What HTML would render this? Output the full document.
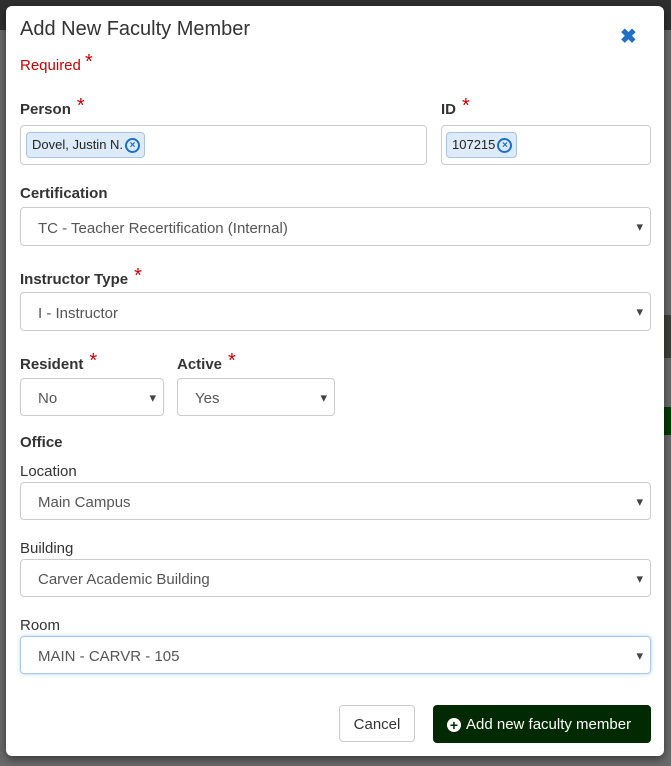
<!DOCTYPE html>
<html><head><style>
body{margin:0;width:671px;height:766px;background:#6a6a6a;font-family:"Liberation Sans",sans-serif;position:relative;overflow:hidden;color:#333}
.topbar{position:absolute;left:0;top:0;width:671px;height:30px;background:#2f2f2f}
.a{position:absolute}
.modal{position:absolute;left:6px;top:6px;width:658px;height:750px;background:#fff;border-radius:6px;box-shadow:0 3px 9px rgba(0,0,0,.5)}
.lbl{position:absolute;font-size:15px;font-weight:bold;color:#333}
.star{color:#c00;font-size:20px;font-weight:normal;margin-left:6px;position:relative;top:-2px}
.sub{position:absolute;font-size:15px;color:#333}
.sel{position:absolute;height:36px;border:1px solid #ccc;border-radius:4px;background:#fff;font-size:15px;color:#555;line-height:38px;padding-left:17px;box-sizing:border-box}
.sel.ar:after{content:"▾";position:absolute;right:7px;top:0;font-size:13px;color:#444}
.tag{position:absolute;top:6px;height:26px;box-sizing:border-box;background:#ddebf8;border:1px solid #a9c4de;border-radius:4px;font-size:13px;padding:0 4px 0 5px;color:#222;display:flex;align-items:center}
.x{display:inline-block;width:11px;height:11px;border:2px solid #1c6fc7;border-radius:50%;color:#1c6fc7;font-size:10px;line-height:11px;text-align:center;font-weight:bold;margin-left:2px}
</style></head><body>
<div class="topbar"></div>
<div class="a" style="left:664px;top:315px;width:7px;height:43px;background:#3f3f3a"></div>
<div class="a" style="left:664px;top:407px;width:7px;height:28px;background:#063806"></div>
<div class="modal">
<div class="a" style="left:14px;top:12px;font-size:20px;color:#333">Add New Faculty Member</div>
<div class="a" style="left:614px;top:18px;font-size:20px;color:#1f6fc5;font-weight:bold">✖</div>
<div class="a" style="left:14px;top:47px;font-size:15px;color:#c00">Required <span style="font-size:20px;position:relative;top:-2px">*</span></div>
<div class="lbl" style="left:14px;top:91px">Person<span class="star">*</span></div>
<div class="lbl" style="left:435px;top:91px">ID<span class="star">*</span></div>
<div class="sel" style="left:14px;top:119px;width:407px;height:40px"><div class="tag" style="left:5px">Dovel, Justin N.<span class="x">×</span></div></div>
<div class="sel" style="left:435px;top:119px;width:210px;height:40px"><div class="tag" style="left:4px">107215<span class="x">×</span></div></div>
<div class="lbl" style="left:14px;top:179px">Certification</div>
<div class="sel ar" style="left:14px;top:201px;width:631px;height:39px;padding-top:2px">TC - Teacher Recertification (Internal)</div>
<div class="lbl" style="left:14px;top:261px">Instructor Type<span class="star">*</span></div>
<div class="sel ar" style="left:14px;top:286px;width:631px;height:39px;padding-top:2px">I - Instructor</div>
<div class="lbl" style="left:14px;top:346px">Resident<span class="star">*</span></div>
<div class="lbl" style="left:171px;top:346px">Active<span class="star">*</span></div>
<div class="sel ar" style="left:14px;top:372px;width:144px;height:38px;padding-top:1px">No</div>
<div class="sel ar" style="left:171px;top:372px;width:158px;height:38px;padding-top:1px">Yes</div>
<div class="lbl" style="left:14px;top:428px">Office</div>
<div class="sub" style="left:14px;top:457px">Location</div>
<div class="sel ar" style="left:14px;top:476px;width:631px;height:38px;padding-top:1px">Main Campus</div>
<div class="sub" style="left:14px;top:534px">Building</div>
<div class="sel ar" style="left:14px;top:553px;width:631px;height:38px;padding-top:1px">Carver Academic Building</div>
<div class="sub" style="left:14px;top:611px">Room</div>
<div class="sel ar" style="left:14px;top:630px;width:631px;height:38px;padding-top:1px;border-color:#a9c8ea;box-shadow:0 0 4px rgba(102,175,233,.5)">MAIN - CARVR - 105</div>
<div class="a" style="left:333px;top:699px;width:76px;height:37px;border:1px solid #ccc;border-radius:4px;box-sizing:border-box;font-size:15px;text-align:center;line-height:37px;color:#333">Cancel</div>
<div class="a" style="left:427px;top:699px;width:218px;height:38px;background:#022a02;border-radius:4px;color:#fff;font-size:15px;line-height:40px;padding-left:14px;box-sizing:border-box"><span style="display:inline-block;width:14px;height:14px;border-radius:50%;background:#fff;color:#022a02;font-weight:bold;font-size:14px;line-height:14px;text-align:center;vertical-align:-1px;margin-right:5px">+</span>Add new faculty member</div>
</div>
</body></html>
